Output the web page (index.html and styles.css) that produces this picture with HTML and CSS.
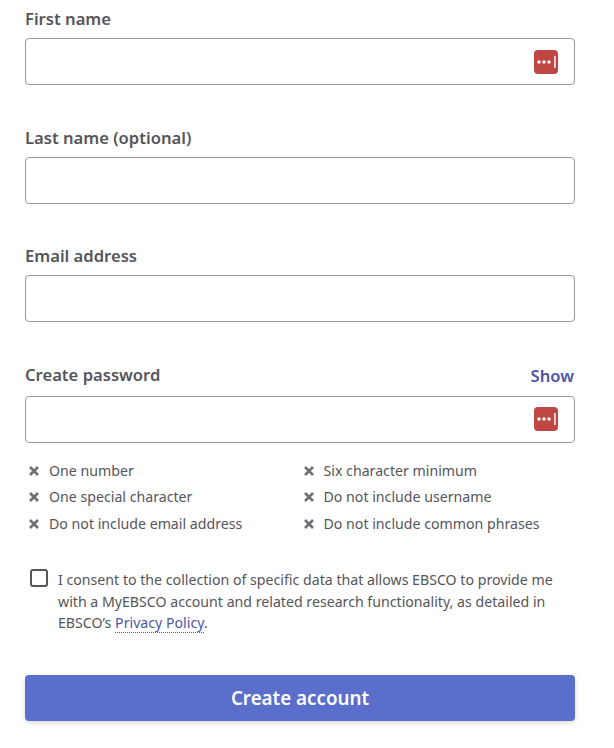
FILE: index.html
```html
<!DOCTYPE html>
<html lang="en">
<head>
<meta charset="utf-8">
<title>Create account</title>
<link rel="stylesheet" href="styles.css">
</head>
<body>
<form class="form">
  <div class="field">
    <div class="label-row"><label class="label">First name</label></div>
    <div class="input">
      <svg class="pm" viewBox="0 0 24 24"><rect width="24" height="24" rx="4" fill="#bf4743"/><circle cx="5" cy="12" r="1.7" fill="#fff"/><circle cx="10" cy="12" r="1.7" fill="#fff"/><circle cx="15" cy="12" r="1.7" fill="#fff"/><rect x="20" y="6" width="1.8" height="12" fill="#f3d9d8"/></svg>
    </div>
  </div>
  <div class="field">
    <div class="label-row"><label class="label">Last name (optional)</label></div>
    <div class="input"></div>
  </div>
  <div class="field">
    <div class="label-row"><label class="label">Email address</label></div>
    <div class="input"></div>
  </div>
  <div class="field field-pass">
    <div class="label-row"><label class="label">Create password</label><a class="show">Show</a></div>
    <div class="input">
      <svg class="pm" viewBox="0 0 24 24"><rect width="24" height="24" rx="4" fill="#bf4743"/><circle cx="5" cy="12" r="1.7" fill="#fff"/><circle cx="10" cy="12" r="1.7" fill="#fff"/><circle cx="15" cy="12" r="1.7" fill="#fff"/><rect x="20" y="6" width="1.8" height="12" fill="#f3d9d8"/></svg>
    </div>
  </div>
  <ul class="reqs">
    <li><svg class="x" viewBox="0 0 10 10"><path d="M1 1l8 8M9 1l-8 8"/></svg>One number</li>
    <li><svg class="x" viewBox="0 0 10 10"><path d="M1 1l8 8M9 1l-8 8"/></svg>Six character minimum</li>
    <li><svg class="x" viewBox="0 0 10 10"><path d="M1 1l8 8M9 1l-8 8"/></svg>One special character</li>
    <li><svg class="x" viewBox="0 0 10 10"><path d="M1 1l8 8M9 1l-8 8"/></svg>Do not include username</li>
    <li><svg class="x" viewBox="0 0 10 10"><path d="M1 1l8 8M9 1l-8 8"/></svg>Do not include email address</li>
    <li><svg class="x" viewBox="0 0 10 10"><path d="M1 1l8 8M9 1l-8 8"/></svg>Do not include common phrases</li>
  </ul>
  <div class="consent">
    <span class="box"></span>
    <p class="consent-text">I consent to the collection of specific data that allows EBSCO to provide me with a MyEBSCO account and related research functionality, as detailed in EBSCO’s <a class="policy">Privacy Policy</a>.</p>
  </div>
  <button type="button" class="submit">Create account</button>
</form>
</body>
</html>
```
FILE: styles.css
```css
html, body { margin: 0; padding: 0; background: #fff; }
body { font-family: "Noto Sans", sans-serif; color: #55555b; width: 614px; height: 748px; overflow: hidden; }
.form { padding: 0 39px 0 25px; display: flex; flex-direction: column; }
.field { margin-bottom: 33.6px; }
.field-pass { margin-bottom: 0; }
.label-row { height: 38px; display: flex; justify-content: space-between; align-items: center; }
.label { font-size: 16.6px; font-weight: 600; line-height: 22px; }
.show { font-size: 16.6px; font-weight: 600; color: #4f56a6; margin-right: 1px; }
.field-pass .label-row { height: 39px; padding-bottom: 1px; box-sizing: content-box; }
.input { height: 47px; box-sizing: border-box; border: 1px solid #9a9a9a; border-radius: 4px; display: flex; align-items: center; justify-content: flex-end; padding-right: 16px; background: #fff; }
.pm { width: 24px; height: 24px; display: block; }
.reqs { list-style: none; margin: 15px 0 0; padding: 0 0 0 4px; display: grid; grid-template-columns: 274.5px 1fr; grid-auto-rows: 26.4px; font-size: 14.17px; line-height: 26px; }
.reqs li { display: flex; align-items: center; }
.x { width: 10px; height: 10px; margin-right: 10px; flex: none; overflow: visible; }
.x path { stroke: #6f6f75; stroke-width: 2.6; fill: none; }
.consent { display: flex; margin-top: 32.3px; padding-left: 5px; }
.box { width: 18px; height: 18px; box-sizing: border-box; border: 2px solid #55555b; border-radius: 3px; flex: none; margin-right: 10px; }
.consent-text { margin: 0; font-size: 14.17px; line-height: 21.5px; width: 510px; }
.policy { color: #4f56a6; border-bottom: 1px dotted #4f56a6; }
.submit { margin-top: 41px; height: 46px; border: 0; border-radius: 4px; background: #5a6ecb; color: #fff; font-family: inherit; font-size: 18.8px; font-weight: 600; box-shadow: 0 2px 5px rgba(0,0,0,.15); }
```
